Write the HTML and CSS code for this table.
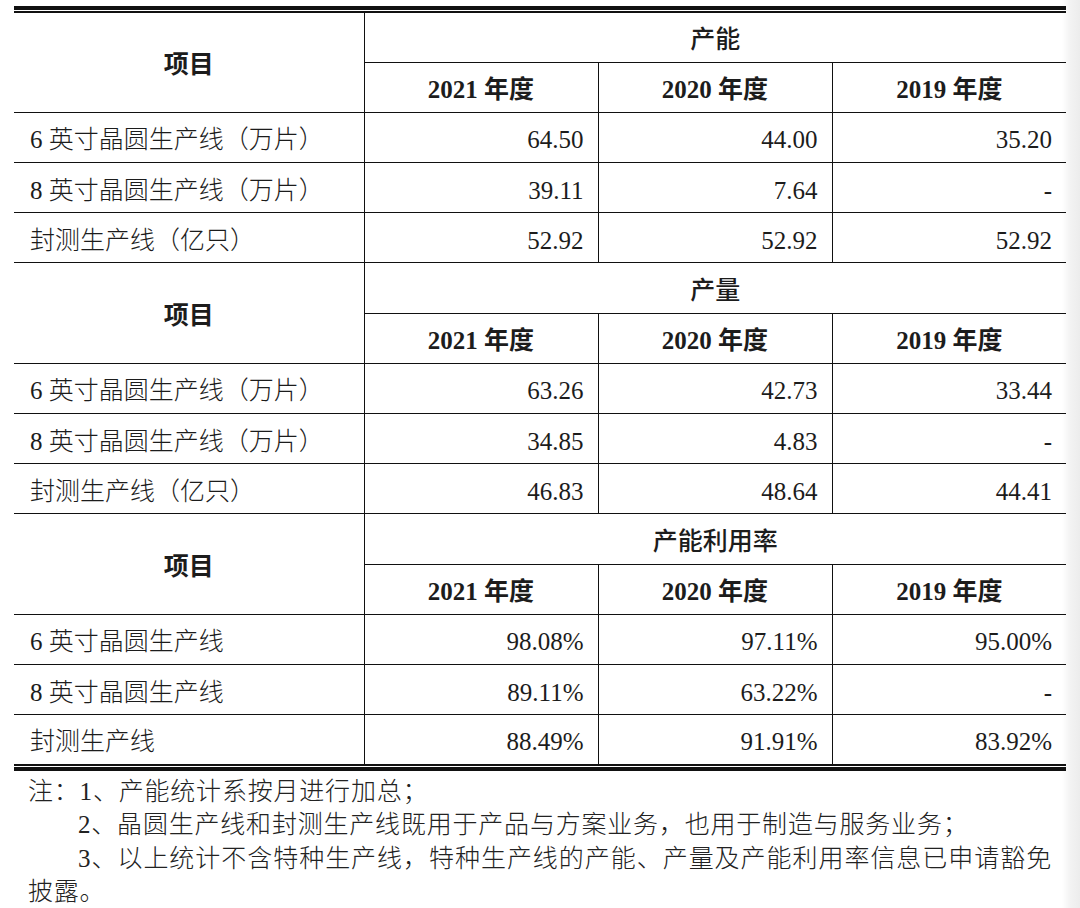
FILE: index.html
```html
<!DOCTYPE html>
<html lang="zh-CN">
<head>
<meta charset="utf-8">
<title>产能、产量及产能利用率</title>
<link rel="stylesheet" href="styles.css">
</head>
<body>
<div class="page">
  <div class="tbl-wrap">
    <table class="cap">
      <colgroup>
        <col class="c-item"><col class="c-val"><col class="c-val"><col class="c-val">
      </colgroup>
      <tbody>
        <tr class="hr">
          <th rowspan="2" class="item-h">项目</th>
          <th colspan="3" class="grp">产能</th>
        </tr>
        <tr class="hr">
          <th class="yr">2021 年度</th><th class="yr">2020 年度</th><th class="yr">2019 年度</th>
        </tr>
        <tr><td class="name">6 英寸晶圆生产线（万片）</td><td class="num">64.50</td><td class="num">44.00</td><td class="num">35.20</td></tr>
        <tr><td class="name">8 英寸晶圆生产线（万片）</td><td class="num">39.11</td><td class="num">7.64</td><td class="num">-</td></tr>
        <tr><td class="name">封测生产线（亿只）</td><td class="num">52.92</td><td class="num">52.92</td><td class="num">52.92</td></tr>

        <tr class="hr">
          <th rowspan="2" class="item-h">项目</th>
          <th colspan="3" class="grp">产量</th>
        </tr>
        <tr class="hr">
          <th class="yr">2021 年度</th><th class="yr">2020 年度</th><th class="yr">2019 年度</th>
        </tr>
        <tr><td class="name">6 英寸晶圆生产线（万片）</td><td class="num">63.26</td><td class="num">42.73</td><td class="num">33.44</td></tr>
        <tr><td class="name">8 英寸晶圆生产线（万片）</td><td class="num">34.85</td><td class="num">4.83</td><td class="num">-</td></tr>
        <tr><td class="name">封测生产线（亿只）</td><td class="num">46.83</td><td class="num">48.64</td><td class="num">44.41</td></tr>

        <tr class="hr">
          <th rowspan="2" class="item-h">项目</th>
          <th colspan="3" class="grp">产能利用率</th>
        </tr>
        <tr class="hr">
          <th class="yr">2021 年度</th><th class="yr">2020 年度</th><th class="yr">2019 年度</th>
        </tr>
        <tr><td class="name">6 英寸晶圆生产线</td><td class="num">98.08%</td><td class="num">97.11%</td><td class="num">95.00%</td></tr>
        <tr><td class="name">8 英寸晶圆生产线</td><td class="num">89.11%</td><td class="num">63.22%</td><td class="num">-</td></tr>
        <tr><td class="name">封测生产线</td><td class="num">88.49%</td><td class="num">91.91%</td><td class="num">83.92%</td></tr>
      </tbody>
    </table>
  </div>
  <div class="notes">
    <p class="note">注：1、产能统计系按月进行加总；</p>
    <p class="note ind">2、晶圆生产线和封测生产线既用于产品与方案业务，也用于制造与服务业务；</p>
    <p class="note ind">3、以上统计不含特种生产线，特种生产线的产能、产量及产能利用率信息已申请豁免披露。</p>
  </div>
</div>
</body>
</html>
```

FILE: styles.css
```css
html, body {
  margin: 0;
  padding: 0;
}

body {
  width: 1080px;
  min-height: 908px;
  background: linear-gradient(to right, #ffffff 0, #ffffff 1062px, #f3f3f3 1070px, #ececec 1080px);
  font-family: "Liberation Serif", "Noto Sans CJK SC", serif;
  color: #1c1c1c;
}

.page {
  padding-top: 6px;
}

.tbl-wrap {
  margin-left: 14px;
  width: 1052px;
  border-top: 4px solid #111;
  border-bottom: 4px solid #111;
  padding: 1px 0;
}

.cap {
  width: 1052px;
  table-layout: fixed;
  border-collapse: collapse;
  border-top: 2px solid #111;
  border-bottom: 2px solid #111;
}

.c-item { width: 350px; }
.c-val { width: 234px; }

.cap tr {
  height: 50.2px;
}

.cap th,
.cap td {
  padding: 6px 14px 0 16px;
  border-top: 1px solid #111;
  border-bottom: 1px solid #111;
  font-size: 25px;
  line-height: 30px;
  vertical-align: middle;
  white-space: nowrap;
}

.cap th + th,
.cap td + td,
.cap .yr {
  border-left: 1px solid #111;
}

.cap th {
  text-align: center;
  font-weight: 700;
  padding: 6px 0 0;
}

.cap .grp {
  font-weight: 500;
}

.cap .name {
  text-align: left;
  padding-left: 16px;
  font-weight: 300;
}

.cap .num {
  text-align: right;
}

.notes {
  margin: 4px 0 0 28px;
  width: 1024px;
}

.note {
  margin: 0;
  font-size: 25px;
  line-height: 33.5px;
  letter-spacing: 0.8px;
  text-align: justify;
  font-weight: 300;
  color: #222;
}

.note.ind {
  text-indent: 50px;
}
```
